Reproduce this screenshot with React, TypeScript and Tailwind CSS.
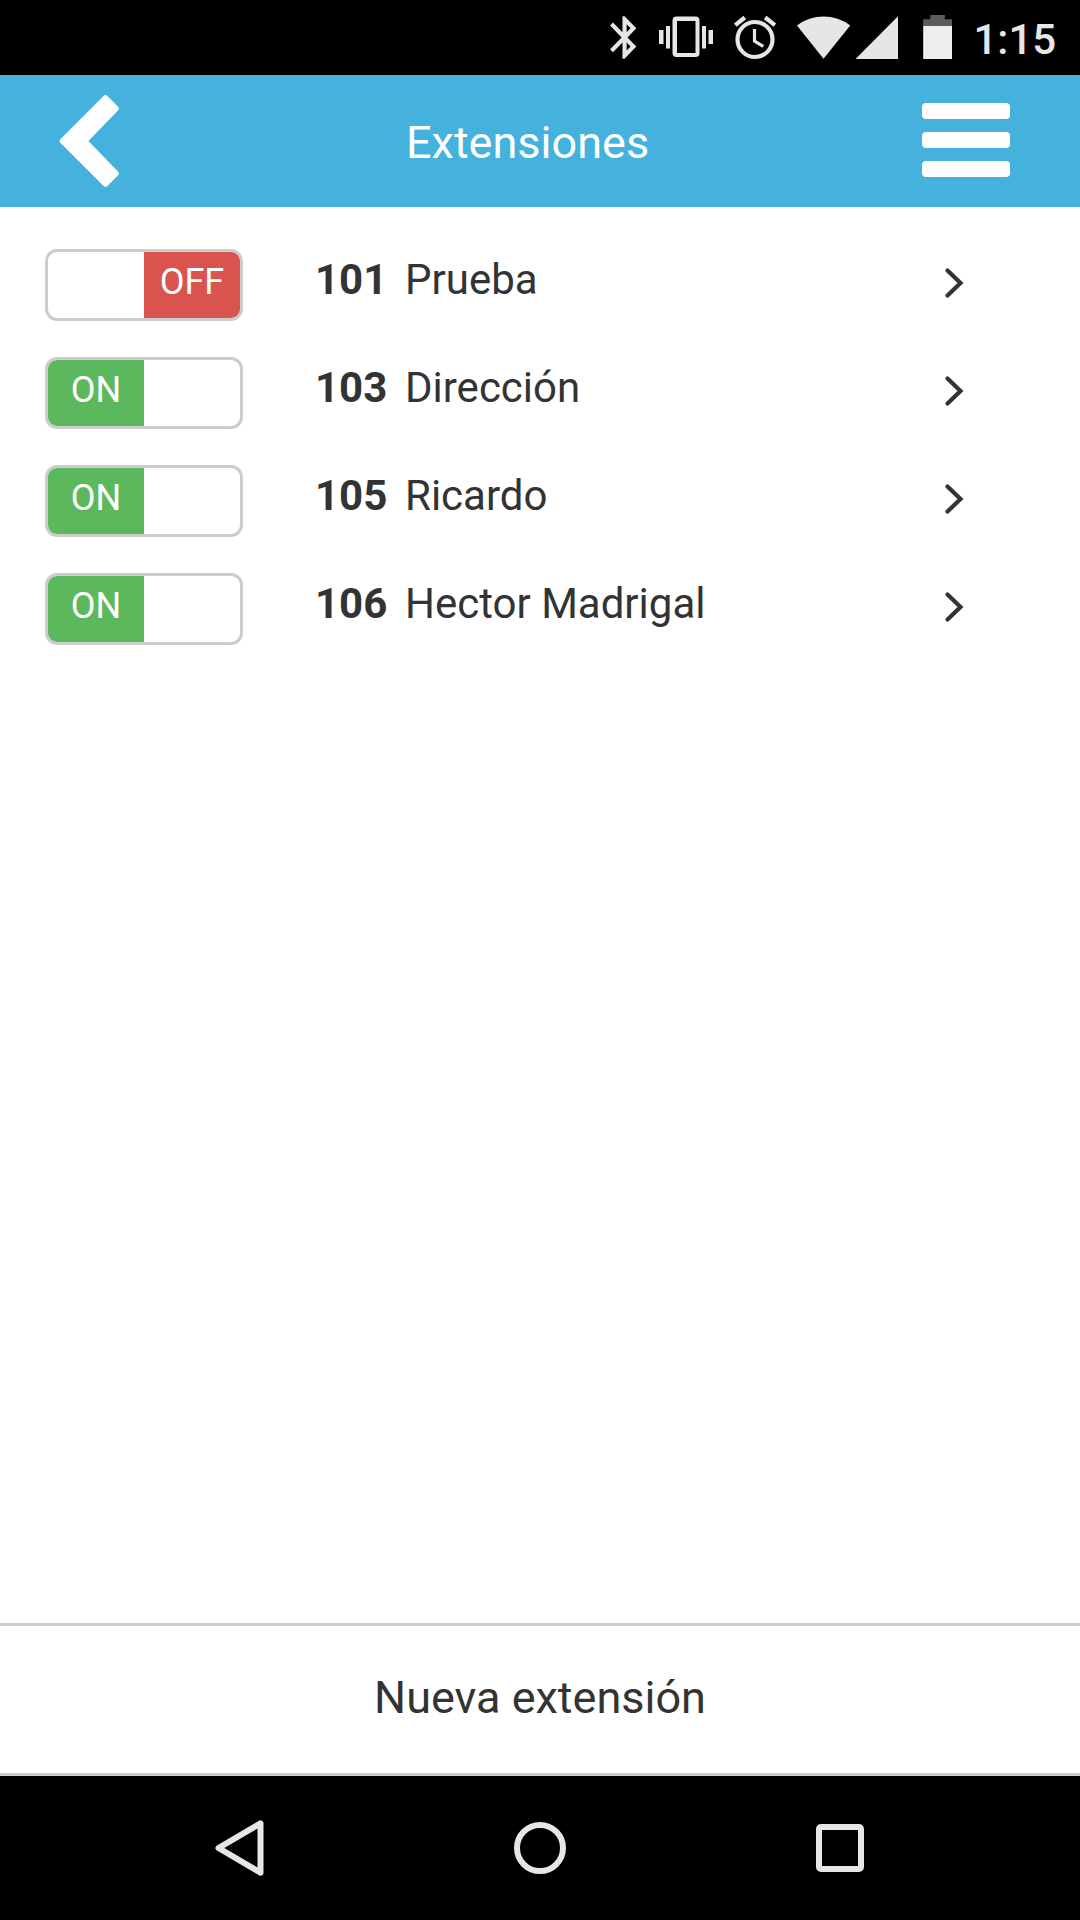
const extensions = [
  { number: '101', name: 'Prueba', on: false },
  { number: '103', name: 'Dirección', on: true },
  { number: '105', name: 'Ricardo', on: true },
  { number: '106', name: 'Hector Madrigal', on: true },
];

function StatusBar() {
  return (
    <div className="flex h-[75px] shrink-0 bg-black pl-[609px] pr-[22px] text-[#e6e6e6]">
      <svg className="h-[75px] w-[28px]" viewBox="609 0 28 75" fill="currentColor">
        <path
          transform="translate(599.7 11.9) scale(2.07 2.13)"
          d="M17.71 7.71L12 2h-1v7.59L6.41 5 5 6.41 10.59 12 5 17.59 6.41 19 11 14.41V22h1l5.71-5.71-4.3-4.29 4.3-4.29zM13 5.83l1.88 1.88L13 9.59V5.83zm1.880 10.460L13 18.170v-3.760l1.880 1.880z"
        />
      </svg>
      <svg className="ml-[20px] h-[75px] w-[58px]" viewBox="657 0 58 75" fill="currentColor">
        <path
          fillRule="evenodd"
          d="M676.500 16.500h19a4 4 0 0 1 4 4v32.500a4 4 0 0 1-4 4h-19a4 4 0 0 1-4-4v-32.500a4 4 0 0 1 4-4zM677 21v32h18.500v-32z"
        />
        <path d="M659 30h4.500v14h-4.500zM666 26h4v22.500h-4zM702 26h4v22.500h-4zM708.500 30h4.500v14h-4.500z" />
      </svg>
      <svg className="ml-[17px] h-[75px] w-[46px]" viewBox="732 0 46 75" fill="none" stroke="currentColor">
        <circle cx="755" cy="39.500" r="17.500" strokeWidth="4.200" />
        <path d="M754.500 29v12.200l8.800 5.200" strokeWidth="3.200" />
        <path d="M735.300 25.200 744.800 17.500M765.200 17.500 774.900 25.200" strokeWidth="4.200" />
      </svg>
      <svg className="ml-[18px] h-[75px] w-[56px]" viewBox="796 0 56 75" fill="currentColor">
        <path d="M797 25.500A44 44 0 0 1 850.200 25.500L823.500 58.800z" />
      </svg>
      <svg className="ml-[2px] h-[75px] w-[46px]" viewBox="854 0 46 75" fill="currentColor">
        <path d="M898 16.300V59H855.500z" />
      </svg>
      <svg className="ml-[21px] h-[75px] w-[34px]" viewBox="921 0 34 75">
        <path fill="#5c5c5c" d="M930.300 15h14.500v4.300h7.200V26h-28.800v-6.700h7.100z" />
        <path fill="#eeeeee" d="M923.200 26H952v33h-28.800z" />
      </svg>
      <div className="ml-[18.500px] whitespace-nowrap text-[42px] font-medium leading-[79px]">1:15</div>
    </div>
  );
}

function Header() {
  return (
    <header className="flex h-[132px] shrink-0 bg-[#45b1dd] pl-[56px] text-white">
      <svg className="h-[132px] w-[66px]" viewBox="56 75 66 132">
        <path
          d="M62.500 141 105.500 98 116 108.500 84.500 141 116 173.500 105.500 184z"
          fill="currentColor"
          stroke="currentColor"
          strokeWidth="5.500"
          strokeLinejoin="round"
        />
      </svg>
      <h1 className="ml-[284px] w-[250px] whitespace-nowrap text-[45px] font-normal leading-[135px]">Extensiones</h1>
      <div className="ml-[265.500px] mt-[28px] flex w-[88px] flex-col gap-[13px]">
        <div className="h-[16px] rounded-[4px] bg-white" />
        <div className="h-[16px] rounded-[4px] bg-white" />
        <div className="h-[16px] rounded-[4px] bg-white" />
      </div>
    </header>
  );
}

function Toggle({ on }: { on: boolean }) {
  return (
    <div className="flex h-[72px] w-[198px] overflow-hidden rounded-[12px] border-[3px] border-[#ccc] text-center text-[36px] leading-[60px] text-white">
      <div className={on ? 'w-1/2 bg-[#5cb85c]' : 'w-1/2'}>{on ? 'ON' : ''}</div>
      <div className={on ? 'w-1/2' : 'w-1/2 bg-[#d9534f]'}>{on ? '' : 'OFF'}</div>
    </div>
  );
}

export default function App() {
  return (
    <div className="flex h-[1920px] w-[1080px] flex-col overflow-hidden bg-white font-['Roboto',sans-serif] text-[#333]">
      <StatusBar />
      <Header />
      <main className="flex flex-1 flex-col gap-9 pl-[45px] pt-[42px]">
        {extensions.map((item) => (
          <div key={item.number} className="flex h-[72px]">
            <Toggle on={item.on} />
            <div className="ml-[72px] w-[90px] text-[42px] font-bold leading-[61px]">{item.number}</div>
            <div className="w-[537px] text-[42px] leading-[61px]">{item.name}</div>
            <svg className="mt-[16px] h-[36px] w-[24px]" viewBox="0 0 24 36" fill="none" stroke="#333" strokeWidth="4.200" strokeLinecap="round">
              <path d="M5.500 5.500 18.500 18 5.500 30.500" />
            </svg>
          </div>
        ))}
      </main>
      <button className="h-[153px] shrink-0 border-y-[3px] border-[#ccc] text-center text-[45px]">
        <span className="block h-[147px] leading-[143px]">Nueva extensión</span>
      </button>
      <nav className="flex h-[144px] shrink-0 items-center bg-black pl-[210px] text-[#e6e6e6]">
        <svg className="h-[60px] w-[60px]" viewBox="210 1818 60 60" fill="none" stroke="currentColor" strokeWidth="6" strokeLinejoin="round">
          <path d="M218.500 1848 260.500 1823.300V1872.700z" />
        </svg>
        <div className="ml-[244px] h-[52px] w-[52px] rounded-full border-[6px] border-[#e6e6e6]" />
        <div className="ml-[250px] h-[48px] w-[48px] rounded-[5px] border-[6px] border-[#e6e6e6]" />
      </nav>
    </div>
  );
}
